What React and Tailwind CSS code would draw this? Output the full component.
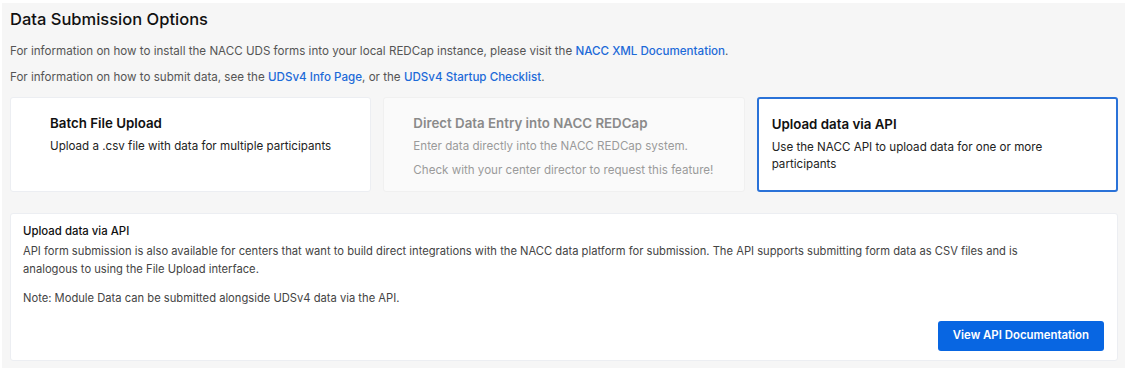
import React from 'react';

const OptionCard = ({ title, lines, selected, disabled, padLeft }) => {
  const base = 'rounded-[3px] pt-[15px] pb-3 pr-4 min-h-[95px]';
  let look = 'bg-white border border-[#eceef2]';
  if (selected) look = 'bg-white border-2 border-[#2a72d8]';
  if (disabled) look = 'bg-[#fafafa] border border-[#f0f0f0]';
  return (
    <div className={`${base} ${look} ${padLeft}`}>
      <h3 className={`text-[13.3px] font-semibold leading-5 ${disabled ? 'text-[#8a8a8a]' : 'text-[#111]'}`}>{title}</h3>
      <div className="mt-[5px] flex flex-col gap-[7px]">
        {lines.map((l) => (
          <p key={l} className={`text-[11.6px] leading-[17px] ${disabled ? 'text-[#9a9a9a]' : 'text-[#222]'}`}>{l}</p>
        ))}
      </div>
    </div>
  );
};

export default function App() {
  return (
    <div className="w-[1128px] h-[370px] bg-white pt-[3px] pl-[2px] pr-[3px] pb-[2px]" style={{ fontFamily: 'Inter, "Noto Sans", sans-serif' }}>
      <div className="h-full bg-[#f6f6f6] pl-2 pr-[7px] pt-[5px]">
        <h1 className="text-[16.5px] font-medium text-[#111] leading-[22px]">Data Submission Options</h1>
        <p className="mt-[13px] text-[11.6px] text-[#555] leading-4">
          For information on how to install the NACC UDS forms into your local REDCap instance, please visit the{' '}
          <a className="text-[#1d6ad8] font-medium">NACC XML Documentation</a>.
        </p>
        <p className="mt-[10px] text-[11.6px] text-[#555] leading-4">
          For information on how to submit data, see the <a className="text-[#1d6ad8] font-medium">UDSv4 Info Page</a>, or the{' '}
          <a className="text-[#1d6ad8] font-medium">UDSv4 Startup Checklist</a>.
        </p>

        <div className="mt-[12px] grid grid-cols-3 gap-3">
          <OptionCard
            title="Batch File Upload"
            lines={['Upload a .csv file with data for multiple participants']}
            padLeft="pl-[39px]"
          />
          <OptionCard
            title="Direct Data Entry into NACC REDCap"
            lines={['Enter data directly into the NACC REDCap system.', 'Check with your center director to request this feature!']}
            disabled
            padLeft="pl-[29px]"
          />
          <OptionCard
            title="Upload data via API"
            lines={['Use the NACC API to upload data for one or more participants']}
            selected
            padLeft="pl-[13px] pr-[60px]"
          />
        </div>

        <div className="mt-[21px] bg-white border border-[#eceef2] rounded-[3px] pl-[12px] pr-[13px] pt-[9px] pb-[9px]">
          <h4 className="text-[11.4px] font-medium text-[#111] leading-4">Upload data via API</h4>
          <p className="mt-[3px] text-[11.2px] text-[#444] leading-[18px] max-w-[1000px]">
            API form submission is also available for centers that want to build direct integrations with the NACC data platform for submission. The API supports submitting form data as CSV files and is analogous to using the File Upload interface.
          </p>
          <p className="mt-[11px] text-[11.2px] text-[#444] leading-[18px]">
            Note: Module Data can be submitted alongside UDSv4 data via the API.
          </p>
          <div className="mt-[14px] flex justify-end">
            <button className="h-[30px] px-[15px] bg-[#0866e2] text-white text-[11.4px] font-semibold rounded-[3px]">
              View API Documentation
            </button>
          </div>
        </div>
      </div>
    </div>
  );
}
